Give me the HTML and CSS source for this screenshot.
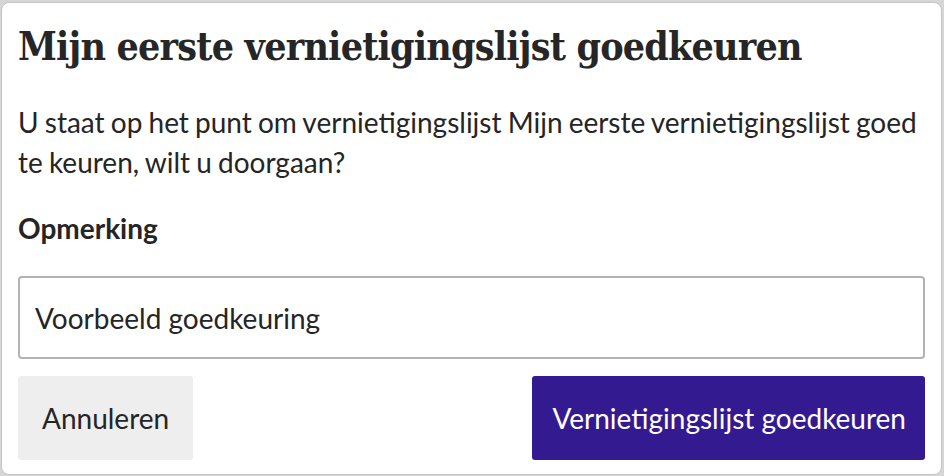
FILE: index.html
```html
<!DOCTYPE html>
<html lang="nl">
<head>
<meta charset="utf-8">
<title>Mijn eerste vernietigingslijst goedkeuren</title>
<link rel="stylesheet" href="styles.css">
</head>
<body>
<div class="dialog">
  <h1 class="title">Mijn eerste vernietigingslijst goedkeuren</h1>
  <p class="message">U staat op het punt om vernietigingslijst Mijn eerste vernietigingslijst goed te keuren, wilt u doorgaan?</p>
  <label class="label" for="opmerking">Opmerking</label>
  <input class="input" id="opmerking" type="text" value="Voorbeeld goedkeuring">
  <div class="actions">
    <button class="btn btn-secondary" type="button">Annuleren</button>
    <button class="btn btn-primary" type="button">Vernietigingslijst goedkeuren</button>
  </div>
</div>
</body>
</html>
```

FILE: styles.css
```css
html, body {
  margin: 0;
  padding: 0;
  background: #d6d6d6;
}
body {
  padding: 2px 2px 1px 1px;
  width: 944px;
  height: 476px;
  box-sizing: border-box;
  font-family: Lato, "Open Sans", sans-serif;
  color: #252525;
}
.dialog {
  box-sizing: border-box;
  height: 473px;
  background: #fff;
  border: 1px solid #c4c4c4;
  border-radius: 8px;
  padding: 0 16px;
  display: flex;
  flex-direction: column;
}
.title {
  margin: 19px 0 0;
  font-family: "DejaVu Serif Condensed", "DejaVu Serif", serif;
  font-weight: bold;
  font-size: 39px;
  letter-spacing: -0.8px;
  line-height: 48px;
  color: #262626;
  white-space: nowrap;
}
.message {
  margin: 32px 0 0;
  font-size: 28px;
  line-height: 40px;
  word-spacing: -1px;
}
.label {
  margin-top: 28px;
  font-size: 28px;
  font-weight: bold;
  line-height: 36px;
}
.input {
  margin-top: 30px;
  height: 83px;
  box-sizing: border-box;
  border: 2px solid #b3b3b3;
  border-radius: 4px;
  padding: 0 15px;
  font-family: Lato, sans-serif;
  font-size: 28px;
  color: #252525;
  outline: none;
}
.actions {
  margin-top: 17px;
  display: flex;
  justify-content: space-between;
}
.btn {
  height: 84px;
  border: 0;
  border-radius: 3px;
  font-family: Lato, sans-serif;
  font-size: 28px;
}
.btn-secondary {
  background: #eeeeee;
  color: #252525;
  padding: 0 24px;
}
.btn-primary {
  background: #341a90;
  color: #fff;
  padding: 0 19px 0 20px;
}
```
